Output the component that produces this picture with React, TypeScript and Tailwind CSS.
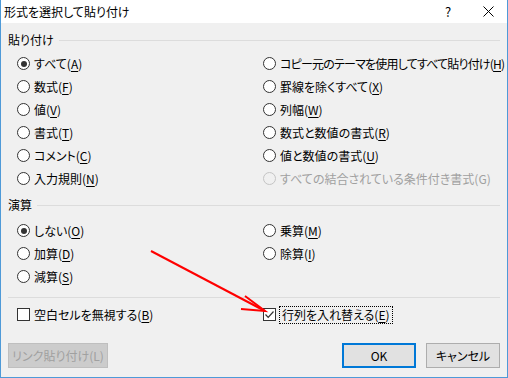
const font = "font-['Meiryo_UI','Noto_Sans_CJK_JP',sans-serif] [font-feature-settings:'palt']";

function Acc({ text }: { text: string }) {
  const i = text.indexOf("&");
  if (i < 0) return <>{text}</>;
  return (
    <>
      {text.slice(0, i)}
      <span className="underline underline-offset-2">{text[i + 1]}</span>
      {text.slice(i + 2)}
    </>
  );
}

function Radio({ label, checked, disabled, tight }: { label: string; checked?: boolean; disabled?: boolean; tight?: boolean }) {
  return (
    <div className="flex h-[23px] items-center gap-[4px]">
      <span
        className={`flex h-[13px] w-[13px] shrink-0 items-center justify-center rounded-full border ${
          disabled ? "border-[#c4c4c4] bg-[#f0f0f0]" : "border-[#333333] bg-white"
        }`}
      >
        {checked && <span className="h-[6px] w-[6px] rounded-full bg-[#333333]" />}
      </span>
      <span
        className={`whitespace-nowrap text-[12px] leading-none ${tight ? "tracking-[-0.8px]" : ""} ${
          disabled ? "text-[#a0a0a0]" : "text-black"
        }`}
      >
        <Acc text={label} />
      </span>
    </div>
  );
}

function Group({ title, children }: { title: string; children: React.ReactNode }) {
  return (
    <div>
      <div className="flex h-[16px] items-center gap-[5px] pl-[7px] pr-[7px]">
        <span className="text-[12px] leading-none text-black">{title}</span>
        <div className="h-px flex-1 bg-[#dcdcdc]" />
      </div>
      {children}
    </div>
  );
}

export default function App() {
  return (
    <div className={`relative flex h-[378px] w-[508px] flex-col border-x border-b border-[#4e9ad8] bg-[#f0f0f0] ${font}`}>
      {/* title bar */}
      <div className="flex h-[23px] items-center bg-white pl-[3px]">
        <span className="text-[12px] leading-none text-black">形式を選択して貼り付け</span>
        <span className="ml-auto w-[8px] text-[13px] leading-none text-black">?</span>
        <svg className="ml-[30px] mr-[13px]" width="11" height="11" viewBox="0 0 11 11">
          <path d="M0.5 0.5 L10.5 10.5 M10.5 0.5 L0.5 10.5" stroke="#000" strokeWidth="1" />
        </svg>
      </div>

      <div className="mt-[9px]">
        <Group title="貼り付け">
          <div className="mt-[4px] grid grid-cols-[246px_1fr] pl-[16px]">
            <Radio label="すべて(&A)" checked />
            <Radio label="コピー元のテーマを使用してすべて貼り付け(&H)" tight />
            <Radio label="数式(&F)" />
            <Radio label="罫線を除くすべて(&X)" />
            <Radio label="値(&V)" />
            <Radio label="列幅(&W)" />
            <Radio label="書式(&T)" />
            <Radio label="数式と数値の書式(&R)" />
            <Radio label="コメント(&C)" />
            <Radio label="値と数値の書式(&U)" />
            <Radio label="入力規則(&N)" />
            <Radio label="すべての結合されている条件付き書式(G)" disabled />
          </div>
        </Group>
      </div>

      <div className="mt-[7px]">
        <Group title="演算">
          <div className="mt-[6px] grid grid-cols-[246px_1fr] pl-[16px]">
            <Radio label="しない(&O)" checked />
            <Radio label="乗算(&M)" />
            <Radio label="加算(&D)" />
            <Radio label="除算(&I)" />
            <Radio label="減算(&S)" />
          </div>
        </Group>
      </div>

      <div className="mx-[7px] mt-[9px] h-px bg-[#dcdcdc]" />

      <div className="mt-[5px] grid h-[23px] grid-cols-[246px_1fr] items-center pl-[16px]">
        <div className="flex items-center gap-[4px]">
          <span className="h-[13px] w-[13px] border border-[#333333] bg-white" />
          <span className="text-[12px] leading-none text-black">
            <Acc text="空白セルを無視する(&B)" />
          </span>
        </div>
        <div className="flex items-center gap-[3px]">
          <span className="flex h-[13px] w-[13px] items-center justify-center border border-[#333333] bg-white">
            <svg width="11" height="11" viewBox="0 0 11 11">
              <path d="M1.5 5.5 L4.2 8.3 L9.5 2.5" fill="none" stroke="#333" strokeWidth="1.2" />
            </svg>
          </span>
          <span className="border border-dotted border-black px-[2px] py-[2px] text-[12px] leading-none text-black">
            <Acc text="行列を入れ替える(&E)" />
          </span>
        </div>
      </div>

      <div className="mt-[17px] flex items-center px-[7px]">
        <div className="flex h-[25px] w-[100px] items-center justify-center border border-[#bfbfbf] bg-[#cccccc] text-[12px] leading-none text-[#a0a0a0]">
          リンク貼り付け(L)
        </div>
        <div className="ml-auto flex h-[25px] w-[74px] items-center justify-center border-2 border-[#0078d7] bg-[#e1e1e1] text-[12px] leading-none text-black">
          OK
        </div>
        <div className="ml-[10px] flex h-[25px] w-[74px] items-center justify-center border border-[#adadad] bg-[#e1e1e1] text-[12px] leading-none text-black">
          キャンセル
        </div>
      </div>

      {/* red annotation arrow */}
      <svg className="pointer-events-none absolute left-0 top-0" width="508" height="378" viewBox="0 0 508 378">
        <path d="M150 251 L264 311" stroke="#ff0000" strokeWidth="2" fill="none" />
        <path d="M244 296 L264 311 L240 309" stroke="#ff0000" strokeWidth="2" fill="none" strokeLinejoin="miter" />
      </svg>
    </div>
  );
}
